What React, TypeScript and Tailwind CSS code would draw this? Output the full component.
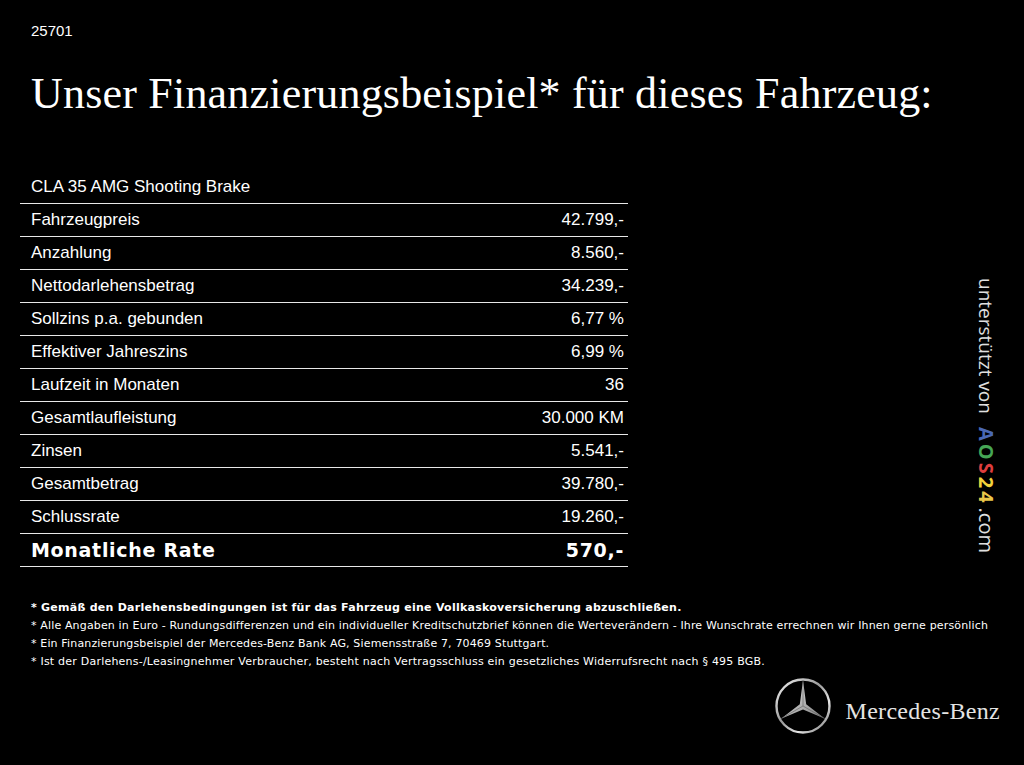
import React from "react";

const rows: [string, string][] = [
  ["Fahrzeugpreis", "42.799,-"],
  ["Anzahlung", "8.560,-"],
  ["Nettodarlehensbetrag", "34.239,-"],
  ["Sollzins p.a. gebunden", "6,77 %"],
  ["Effektiver Jahreszins", "6,99 %"],
  ["Laufzeit in Monaten", "36"],
  ["Gesamtlaufleistung", "30.000 KM"],
  ["Zinsen", "5.541,-"],
  ["Gesamtbetrag", "39.780,-"],
  ["Schlussrate", "19.260,-"],
];

function Star() {
  return (
    <svg width="58" height="58" viewBox="0 0 58 58">
      <defs>
        <linearGradient id="ring" x1="0" y1="0" x2="1" y2="1">
          <stop offset="0" stopColor="#f4f4f4" />
          <stop offset="0.45" stopColor="#9a9a9a" />
          <stop offset="0.7" stopColor="#e6e6e6" />
          <stop offset="1" stopColor="#6a6a6a" />
        </linearGradient>
        <linearGradient id="arm" x1="0" y1="0" x2="1" y2="1">
          <stop offset="0" stopColor="#ffffff" />
          <stop offset="0.5" stopColor="#b8b8b8" />
          <stop offset="1" stopColor="#7a7a7a" />
        </linearGradient>
      </defs>
      <circle cx="29" cy="29" r="26.5" fill="none" stroke="url(#ring)" strokeWidth="2.4" />
      <polygon
        points="29,3.5 32.2,27.2 51,41.7 29,32.6 7,41.7 25.8,27.2"
        fill="url(#arm)"
      />
      <polyline points="29,3.5 29,29 51,41.7" fill="none" stroke="#5a5a5a" strokeWidth="0.6" />
      <line x1="29" y1="29" x2="7" y2="41.7" stroke="#5a5a5a" strokeWidth="0.6" />
    </svg>
  );
}

export default function App() {
  return (
    <div className="w-[1024px] h-[765px] bg-black text-white overflow-hidden flex flex-col">
      <div className="pl-[31px] pt-[22px] h-[40px] text-[15px] leading-[18px] font-['Liberation_Sans',Arial,sans-serif]">
        25701
      </div>
      <h1 className="mt-[30px] pl-[31px] text-[44px] leading-[48px] tracking-[0.2px] font-normal font-['Liberation_Serif','Times_New_Roman',serif] whitespace-nowrap">
        Unser Finanzierungsbeispiel* für dieses Fahrzeug:
      </h1>
      <div className="mt-[53px] flex">
        <div className="ml-[20px] w-[608px] flex flex-col font-['Liberation_Sans',Arial,sans-serif] text-[17px]">
          <div className="h-[33px] border-b border-[#e8e8e8] flex items-center pl-[11px] pr-[4px]">
            CLA 35 AMG Shooting Brake
          </div>
          {rows.map(([l, v]) => (
            <div
              key={l}
              className="h-[33px] border-b border-[#e8e8e8] flex items-center justify-between pl-[11px] pr-[4px]"
            >
              <span>{l}</span>
              <span>{v}</span>
            </div>
          ))}
          <div className="h-[33px] border-b border-[#e8e8e8] flex items-center justify-between pl-[11px] pr-[4px] font-['DejaVu_Sans',Verdana,sans-serif] font-bold text-[19px] tracking-[0.7px]">
            <span>Monatliche Rate</span>
            <span>570,-</span>
          </div>
        </div>
        <div className="flex-1" />
        <div className="mt-[107px] mr-[25px] w-[26px] [writing-mode:vertical-rl] text-[19px] leading-[26px] text-[#e0e0e0] font-['Open_Sans',sans-serif] whitespace-nowrap">
          <span>unterstützt von</span>
          <span className="inline-block pt-[13px] pb-[2px] text-[20px] font-bold tracking-[3px]">
            <span className="text-[#4a68b4]">A</span>
            <span className="text-[#46a655]">O</span>
            <span className="text-[#de3e3e]">S</span>
            <span className="text-[#f2d23c]">2</span>
            <span className="text-[#e9c64a]">4</span>
          </span>
          <span className="text-[20px]">.com</span>
        </div>
      </div>
      <div className="mt-[32px] pl-[31px] text-[11px] leading-[18px] tracking-[0.15px] font-['DejaVu_Sans',Verdana,sans-serif] whitespace-nowrap">
        <div className="font-bold tracking-[0.25px]">
          * Gemäß den Darlehensbedingungen ist für das Fahrzeug eine Vollkaskoversicherung abzuschließen.
        </div>
        <div>
          * Alle Angaben in Euro - Rundungsdifferenzen und ein individueller Kreditschutzbrief können die Werteverändern - Ihre Wunschrate errechnen wir Ihnen gerne persönlich
        </div>
        <div>* Ein Finanzierungsbeispiel der Mercedes-Benz Bank AG, Siemensstraße 7, 70469 Stuttgart.</div>
        <div className="tracking-[0.22px]">
          * Ist der Darlehens-/Leasingnehmer Verbraucher, besteht nach Vertragsschluss ein gesetzliches Widerrufsrecht nach § 495 BGB.
        </div>
      </div>
      <div className="mt-[6px] flex justify-end items-start pr-[24px] gap-[14px]">
        <Star />
        <span className="mt-[20px] text-[24px] leading-[28px] tracking-[0.3px] text-[#e4e4e4] font-['Liberation_Serif','Times_New_Roman',serif]">
          Mercedes-Benz
        </span>
      </div>
    </div>
  );
}
